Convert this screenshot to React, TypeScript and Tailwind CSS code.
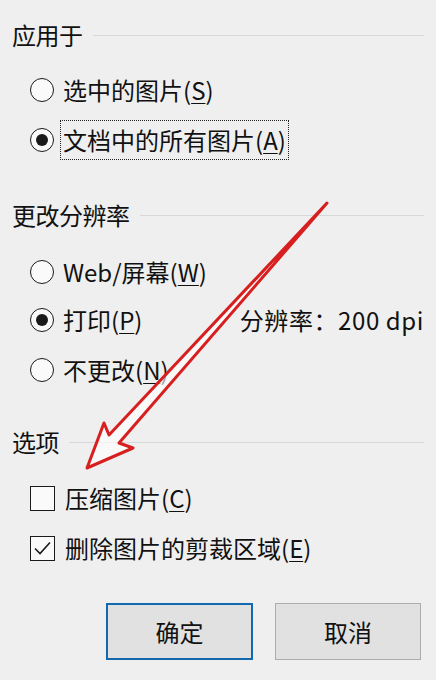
import type { ReactNode } from 'react'

const font = { fontFamily: '"Noto Sans CJK SC", "Microsoft YaHei", sans-serif' }

function Key({ k }: { k: string }) {
  return (
    <span>
      (<span className="underline underline-offset-[3px] decoration-1">{k}</span>)
    </span>
  )
}

function Header({ title, className = '' }: { title: string; className?: string }) {
  return (
    <div className={`flex items-center h-[50px] pl-[12px] pr-[12px] ${className}`}>
      <span className="text-[24px] leading-none tracking-[-0.5px]">{title}</span>
      <div className="flex-1 h-px bg-[#d8d8d8] ml-[10px]" />
    </div>
  )
}

function Radio({ checked, children, className = '' }: { checked?: boolean; children: ReactNode; className?: string }) {
  return (
    <div className={`flex items-center pl-[30px] ${className}`}>
      <div className="w-[24px] h-[24px] rounded-full border-[1.5px] border-[#1a1a1a] bg-[#fafafa] flex items-center justify-center shrink-0">
        {checked && <div className="w-[12px] h-[12px] rounded-full bg-[#1a1a1a]" />}
      </div>
      <div className="ml-[9px] text-[24px] leading-none">{children}</div>
    </div>
  )
}

function Check({ checked, children, className = '' }: { checked?: boolean; children: ReactNode; className?: string }) {
  return (
    <div className={`flex items-center pl-[30px] ${className}`}>
      <div className="w-[25px] h-[25px] border-[1.5px] border-[#1a1a1a] bg-[#fafafa] flex items-center justify-center shrink-0">
        {checked && (
          <svg width="19" height="19" viewBox="0 0 19 19">
            <path d="M2 9.5 L7 14.5 L17 3.5" fill="none" stroke="#1a1a1a" strokeWidth="1.6" />
          </svg>
        )}
      </div>
      <div className="ml-[10px] text-[24px] leading-none">{children}</div>
    </div>
  )
}

export default function App() {
  return (
    <div className="relative w-[436px] h-[680px] bg-[#efefef] text-[#111] overflow-hidden" style={font}>
      <div className="pt-[10px]">
        <Header title="应用于" />
        <Radio className="mt-[5px] h-[50px]">选中的图片<Key k="S" /></Radio>
        <div className="flex items-center pl-[30px] h-[50px]">
          <div className="w-[24px] h-[24px] rounded-full border-[1.5px] border-[#1a1a1a] bg-[#fafafa] flex items-center justify-center shrink-0">
            <div className="w-[12px] h-[12px] rounded-full bg-[#1a1a1a]" />
          </div>
          <div className="ml-[6px] h-[40px] px-[2px] flex items-center border border-dotted border-[#222] text-[24px] leading-none">
            文档中的所有图片<Key k="A" />
          </div>
        </div>

        <Header title="更改分辨率" className="mt-[25px]" />
        <Radio className="mt-[8px] h-[48px]">Web/屏幕<Key k="W" /></Radio>
        <div className="flex items-center justify-between pr-[12px] h-[48px]">
          <Radio checked>打印<Key k="P" /></Radio>
          <span className="text-[24px] leading-none tracking-[0.6px]">分辨率：200 dpi</span>
        </div>
        <Radio className="mt-[2px] h-[48px]">不更改<Key k="N" /></Radio>

        <Header title="选项" className="mt-[23px]" />
        <Check className="mt-[6px] h-[50px]">压缩图片<Key k="C" /></Check>
        <Check checked className="h-[50px]">删除图片的剪裁区域<Key k="E" /></Check>

        <div className="flex justify-end gap-[22px] pr-[15px] mt-[30px]">
          <button className="w-[147px] h-[57px] bg-[#e1e1e1] border-[2.5px] border-[#1468b0] text-[24px] leading-none">确定</button>
          <button className="w-[146px] h-[57px] bg-[#e1e1e1] border border-[#adadad] text-[24px] leading-none">取消</button>
        </div>
      </div>

      <svg className="absolute inset-0 pointer-events-none" width="436" height="680" viewBox="0 0 436 680">
        <path
          d="M327 203 L119 443 L133 448 L87 468 L104 423 L109 435 Z"
          fill="rgba(255,255,255,0.6)"
          stroke="#d81f1f"
          strokeWidth="3"
          strokeLinejoin="round"
        />
      </svg>
    </div>
  )
}
